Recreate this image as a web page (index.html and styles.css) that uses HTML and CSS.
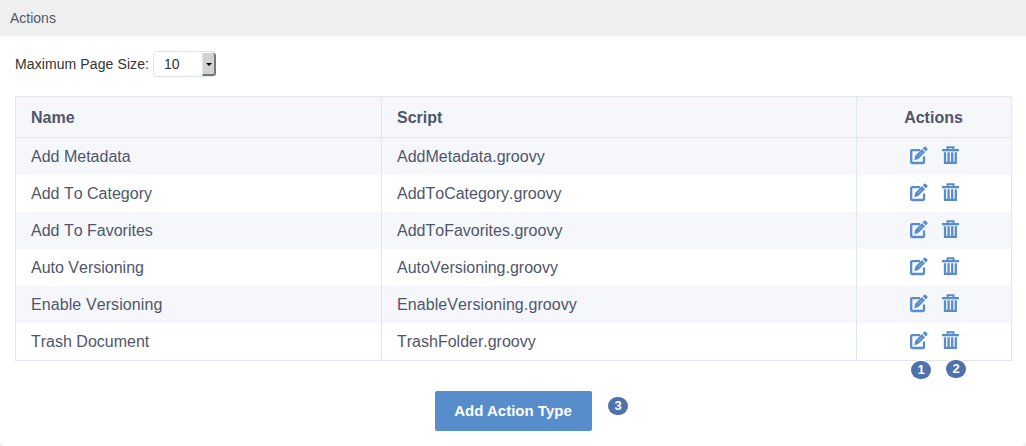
FILE: index.html
```html
<!DOCTYPE html>
<html lang="en">
<head>
<meta charset="utf-8">
<title>Actions</title>
<link rel="stylesheet" href="styles.css">
</head>
<body>
<svg width="0" height="0" class="defs">
  <symbol id="edit" viewBox="0 0 18 19">
    <path d="M10 4.1H2.2Q1.2 4.1 1.2 5.1V16Q1.2 17 2.2 17H13Q14 17 14 16V10.5" fill="none" stroke="currentColor" stroke-width="2.3"/>
    <path d="M4.3 14.2L5.2 9.8L11.9 3.1L15 6.2L8.3 12.9ZM12.7 2.3L14.3.7Q15 .1 15.7.7L17.4 2.4Q18 3 17.4 3.7L15.8 5.4Z" fill="currentColor"/>
    <path d="M8.2 10.2L12.2 6.2" stroke="#fff" stroke-width=".6" fill="none" opacity=".5"/>
  </symbol>
  <symbol id="trash" viewBox="0 0 17 19">
    <path d="M5.5 3V1.2H11.5V3" fill="none" stroke="currentColor" stroke-width="2"/>
    <path d="M0 3H17V5.3H0Z" fill="currentColor"/>
    <path d="M3 6.2V16.9H13.8V6.2M6.6 6.2V16.5M10.2 6.2V16.5" fill="none" stroke="currentColor" stroke-width="2.3"/>
  </symbol>
</svg>
<main class="panel">
  <header class="panel-header">Actions</header>
  <div class="page-size">
    <span class="page-size-label">Maximum Page Size:</span>
    <div class="select"><span>10</span><i class="select-button"></i></div>
  </div>
  <div class="table">
    <div class="row head"><div>Name</div><div>Script</div><div class="tools">Actions</div></div>
    <div class="row"><div>Add Metadata</div><div>AddMetadata.groovy</div><div class="tools"><svg class="edit"><use href="#edit"/></svg><svg class="trash"><use href="#trash"/></svg></div></div>
    <div class="row"><div>Add To Category</div><div>AddToCategory.groovy</div><div class="tools"><svg class="edit"><use href="#edit"/></svg><svg class="trash"><use href="#trash"/></svg></div></div>
    <div class="row"><div>Add To Favorites</div><div>AddToFavorites.groovy</div><div class="tools"><svg class="edit"><use href="#edit"/></svg><svg class="trash"><use href="#trash"/></svg></div></div>
    <div class="row"><div>Auto Versioning</div><div>AutoVersioning.groovy</div><div class="tools"><svg class="edit"><use href="#edit"/></svg><svg class="trash"><use href="#trash"/></svg></div></div>
    <div class="row wide"><div>Enable Versioning</div><div>EnableVersioning.groovy</div><div class="tools"><svg class="edit"><use href="#edit"/></svg><svg class="trash"><use href="#trash"/></svg></div></div>
    <div class="row"><div>Trash Document</div><div>TrashFolder.groovy</div><div class="tools"><svg class="edit"><use href="#edit"/></svg><svg class="trash"><use href="#trash"/></svg></div></div>
  </div>
  <div class="footer"><button class="add">Add Action Type</button></div>
  <span class="badge one">1</span>
  <span class="badge two">2</span>
  <span class="badge three">3</span>
</main>
</body>
</html>
```
FILE: styles.css
```css
* { box-sizing: border-box; }
body { margin: 0; background: #efefef; font: 16px "Liberation Sans", Arial, sans-serif; color: #50566a; }
.defs { position: absolute; }
.panel { position: relative; height: 446px; background: #fff; border-radius: 0 0 6px 6px; overflow: hidden; }
.panel-header { height: 36px; padding-left: 10px; background: #efefef; font-size: 14px; line-height: 36px; }
.page-size { display: flex; height: 60px; padding: 15px 0 0 15px; color: #333; font-size: 14px; line-height: 26px; }
.page-size-label { width: 138px; letter-spacing: .1px; }
.select { display: flex; justify-content: space-between; width: 63px; height: 26px; padding-left: 10px; border: 1px solid #dde5ed; border-radius: 4px; line-height: 24px; }
.select-button { display: flex; align-items: center; justify-content: center; width: 14px; height: 23px; margin-right: -1px; margin-top: 1px; background: #d2d2d2; border: solid #777; border-width: 0 2px 2px 0; border-radius: 0 3px 3px 0; border-left: 1px solid #e4e4e4; }
.select-button::after { content: ""; margin: 1px 0 0 1px; border: 3.5px solid transparent; border-top-color: #000; border-bottom: 0; }
.table { margin: 0 14px 0 15px; border: 1px solid #dfe6ec; font-kerning: none; }
.row { display: grid; grid-template-columns: 366px 475px 1fr; height: 37px; line-height: 37px; }
.row:nth-child(even) { background: #f5f7fb; }
.row > div { padding-left: 15px; border-right: 1px solid #dfe6ec; }
.row > div:last-child { border-right: 0; }
.row.wide { letter-spacing: .09px; }
.row.head { height: 41px; line-height: 41px; background: #f5f7fb; border-bottom: 1px solid #dfe6ec; font-weight: bold; }
.row > .tools { display: flex; justify-content: center; padding: 0; }
.row.head > .tools { padding-right: 1px; }
.tools svg { height: 19px; margin-top: 8px; color: #578dca; }
.tools .edit { width: 18px; margin-right: 14px; }
.tools .trash { width: 17px; }
.footer { display: flex; justify-content: center; padding-top: 30px; }
.add { width: 157px; height: 40px; padding: 0 0 2px; border: 0; border-radius: 2px; background: #578dca; color: #fff; font: bold 15px "Liberation Sans", Arial, sans-serif; }
.badge { position: absolute; width: 20px; height: 18px; border-radius: 9px; background: #4f72ae; color: #fff; text-align: center; font-size: 13px; font-weight: bold; line-height: 18px; box-shadow: 0 0 0 1px #fff; }
.one { left: 911px; top: 361px; }
.two { left: 946px; top: 360px; }
.three { left: 608px; top: 397px; }
```
